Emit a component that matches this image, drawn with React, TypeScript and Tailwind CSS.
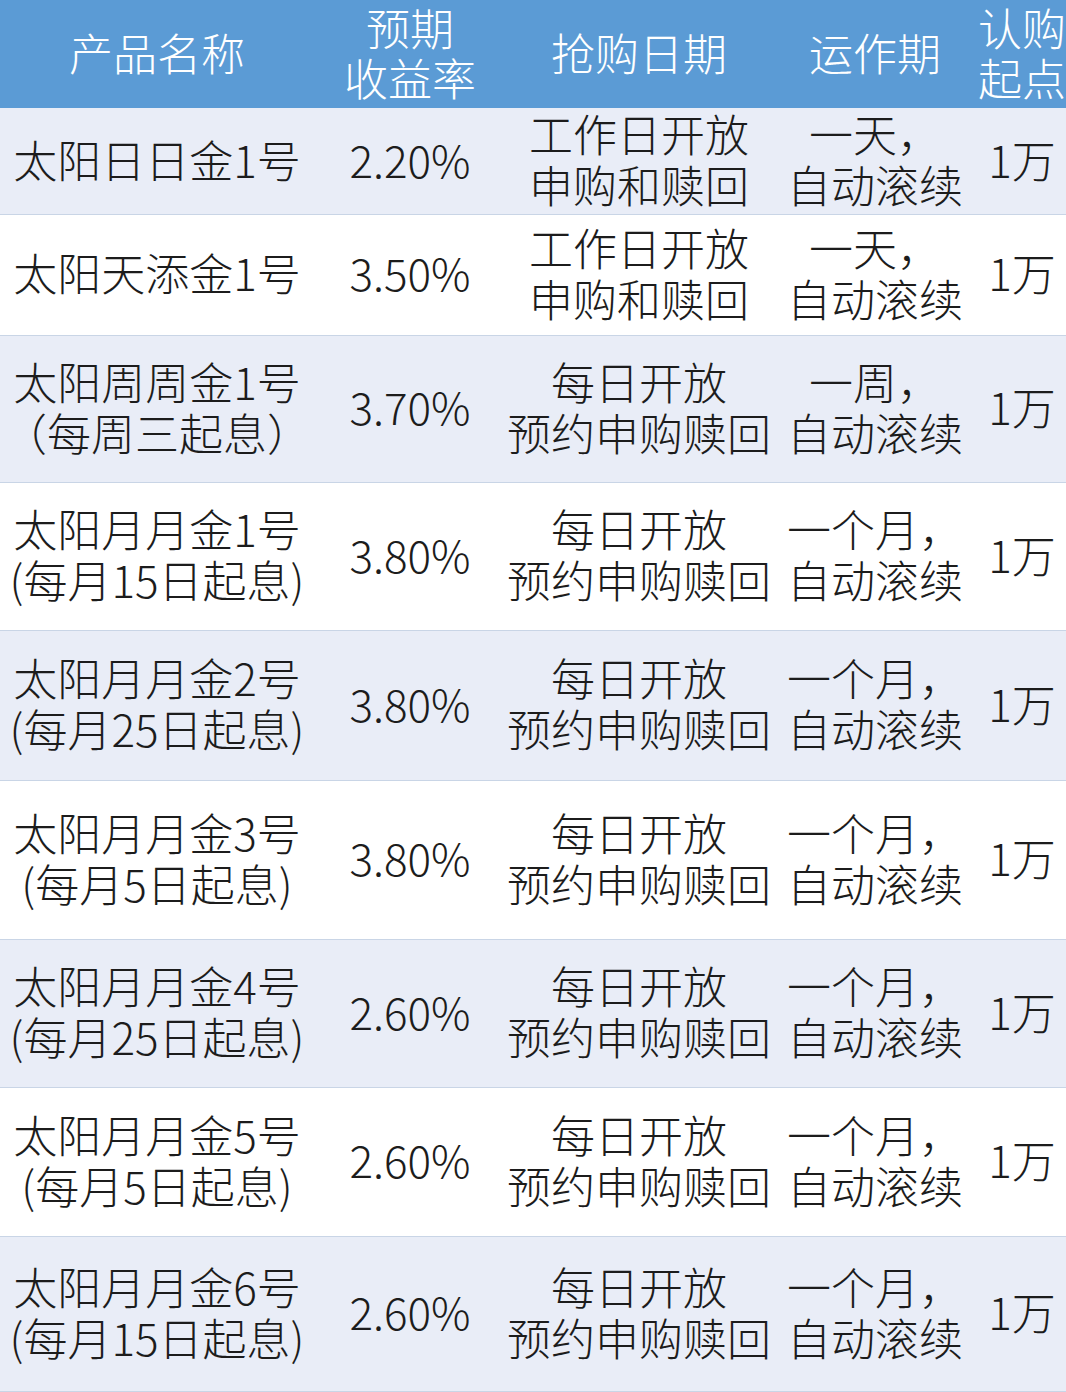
import React from 'react';

type Row = {
  name: string[];
  rate: string;
  date: string[];
  term: string[];
  h: string;
  shade: boolean;
};

const rows: Row[] = [
  { name: ['太阳日日金1号'], rate: '2.20%', date: ['工作日开放', '申购和赎回'], term: ['一天，', '自动滚续'], h: 'h-[107px]', shade: true },
  { name: ['太阳天添金1号'], rate: '3.50%', date: ['工作日开放', '申购和赎回'], term: ['一天，', '自动滚续'], h: 'h-[121px]', shade: false },
  { name: ['太阳周周金1号', '（每周三起息）'], rate: '3.70%', date: ['每日开放', '预约申购赎回'], term: ['一周，', '自动滚续'], h: 'h-[147px]', shade: true },
  { name: ['太阳月月金1号', '(每月15日起息)'], rate: '3.80%', date: ['每日开放', '预约申购赎回'], term: ['一个月，', '自动滚续'], h: 'h-[148px]', shade: false },
  { name: ['太阳月月金2号', '(每月25日起息)'], rate: '3.80%', date: ['每日开放', '预约申购赎回'], term: ['一个月，', '自动滚续'], h: 'h-[150px]', shade: true },
  { name: ['太阳月月金3号', '(每月5日起息)'], rate: '3.80%', date: ['每日开放', '预约申购赎回'], term: ['一个月，', '自动滚续'], h: 'h-[159px]', shade: false },
  { name: ['太阳月月金4号', '(每月25日起息)'], rate: '2.60%', date: ['每日开放', '预约申购赎回'], term: ['一个月，', '自动滚续'], h: 'h-[148px]', shade: true },
  { name: ['太阳月月金5号', '(每月5日起息)'], rate: '2.60%', date: ['每日开放', '预约申购赎回'], term: ['一个月，', '自动滚续'], h: 'h-[149px]', shade: false },
  { name: ['太阳月月金6号', '(每月15日起息)'], rate: '2.60%', date: ['每日开放', '预约申购赎回'], term: ['一个月，', '自动滚续'], h: 'h-[155px]', shade: true },
];

function Cell({ lines }: { lines: string[] }) {
  return (
    <div className="flex flex-col items-center justify-center text-center whitespace-nowrap pb-[5px]">
      {lines.map((l, i) => (
        <span key={i}>{l}</span>
      ))}
    </div>
  );
}

const cols = 'grid grid-cols-[314px_192px_266px_206px_88px]';

export default function App() {
  return (
    <div
      className="w-[1066px] bg-white text-[44px] font-light text-[#1c1c1c] overflow-hidden"
      style={{ fontFamily: '"Noto Sans CJK SC", "Noto Sans", sans-serif' }}
    >
      <div className={`${cols} h-[108px] bg-[#5b9bd5] text-white leading-[50px]`}>
        <Cell lines={['产品名称']} />
        <Cell lines={['预期', '收益率']} />
        <Cell lines={['抢购日期']} />
        <Cell lines={['运作期']} />
        <Cell lines={['认购', '起点']} />
      </div>
      {rows.map((r, i) => (
        <div
          key={i}
          className={`${cols} ${r.h} leading-[51px] border-b border-[#c9d5e6] ${r.shade ? 'bg-[#e9edf7]' : 'bg-white'}`}
        >
          <Cell lines={r.name} />
          <Cell lines={[r.rate]} />
          <Cell lines={r.date} />
          <Cell lines={r.term} />
          <Cell lines={['1万']} />
        </div>
      ))}
    </div>
  );
}
